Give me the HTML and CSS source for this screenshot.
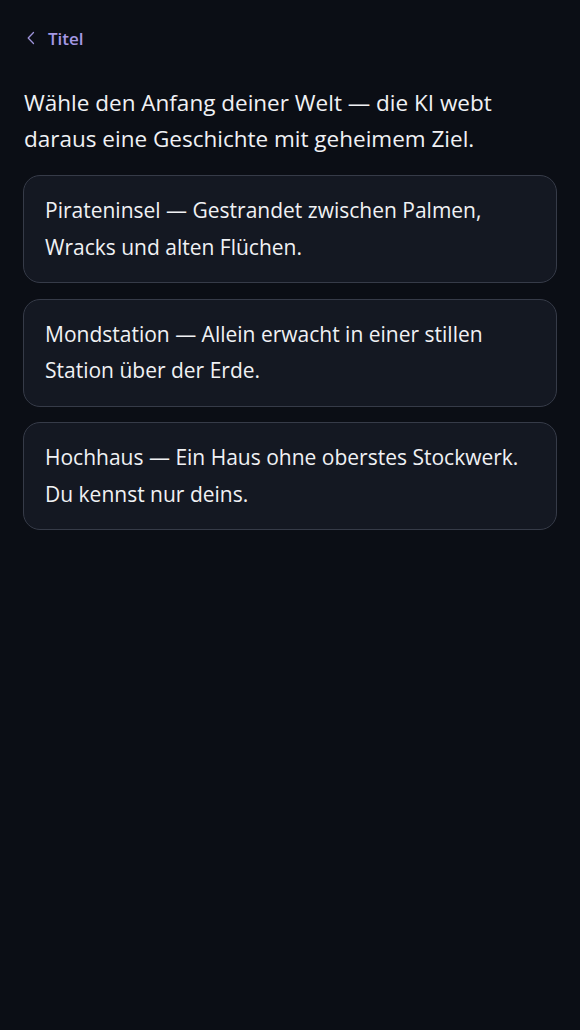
FILE: index.html
```html
<!DOCTYPE html>
<html lang="de">
<head>
<meta charset="utf-8">
<link rel="stylesheet" href="styles.css">
</head>
<body>
<main class="screen">
  <a class="back" href="#">
    <svg class="back-icon" width="8" height="14" viewBox="0 0 8 14"><path d="M6.5 1.5 L1.2 7 L6.5 12.5" fill="none" stroke="currentColor" stroke-width="1.3" stroke-linecap="round" stroke-linejoin="round"/></svg>
    <span>Titel</span>
  </a>
  <p class="intro">Wähle den Anfang deiner Welt — die KI webt daraus eine Geschichte mit geheimem Ziel.</p>
  <div class="options">
    <button class="option">Pirateninsel — Gestrandet zwischen Palmen, Wracks und alten Flüchen.</button>
    <button class="option">Mondstation — Allein erwacht in einer stillen Station über der Erde.</button>
    <button class="option">Hochhaus — Ein Haus ohne oberstes Stockwerk. Du kennst nur deins.</button>
  </div>
</main>
</body>
</html>
```
FILE: styles.css
```css
html, body {
  margin: 0;
  padding: 0;
  background: #0b0e15;
  height: 100%;
}
body {
  font-family: "Open Sans", "Noto Sans", sans-serif;
  color: #f0f1f4;
}
.screen {
  padding: 25px 23px 0 23px;
  display: flex;
  flex-direction: column;
}
.back {
  display: flex;
  align-items: center;
  gap: 13px;
  color: #a598e4;
  text-decoration: none;
  font-size: 17px;
  font-weight: 600;
  padding-left: 4px;
  height: 26px;
}
.back-icon { color: #9d92d9; }
.intro {
  margin: 34px 0 0 1px;
  font-size: 22.5px;
  line-height: 36px;
}
.options {
  margin-top: 18px;
  display: flex;
  flex-direction: column;
  gap: 15.5px;
}
.option {
  text-align: left;
  font-family: inherit;
  font-size: 21px;
  line-height: 36.5px;
  color: #f0f1f4;
  background: #141822;
  border: 1px solid #363b48;
  border-radius: 17px;
  padding: 16px 20px 17px 21px;
  cursor: pointer;
}
```
